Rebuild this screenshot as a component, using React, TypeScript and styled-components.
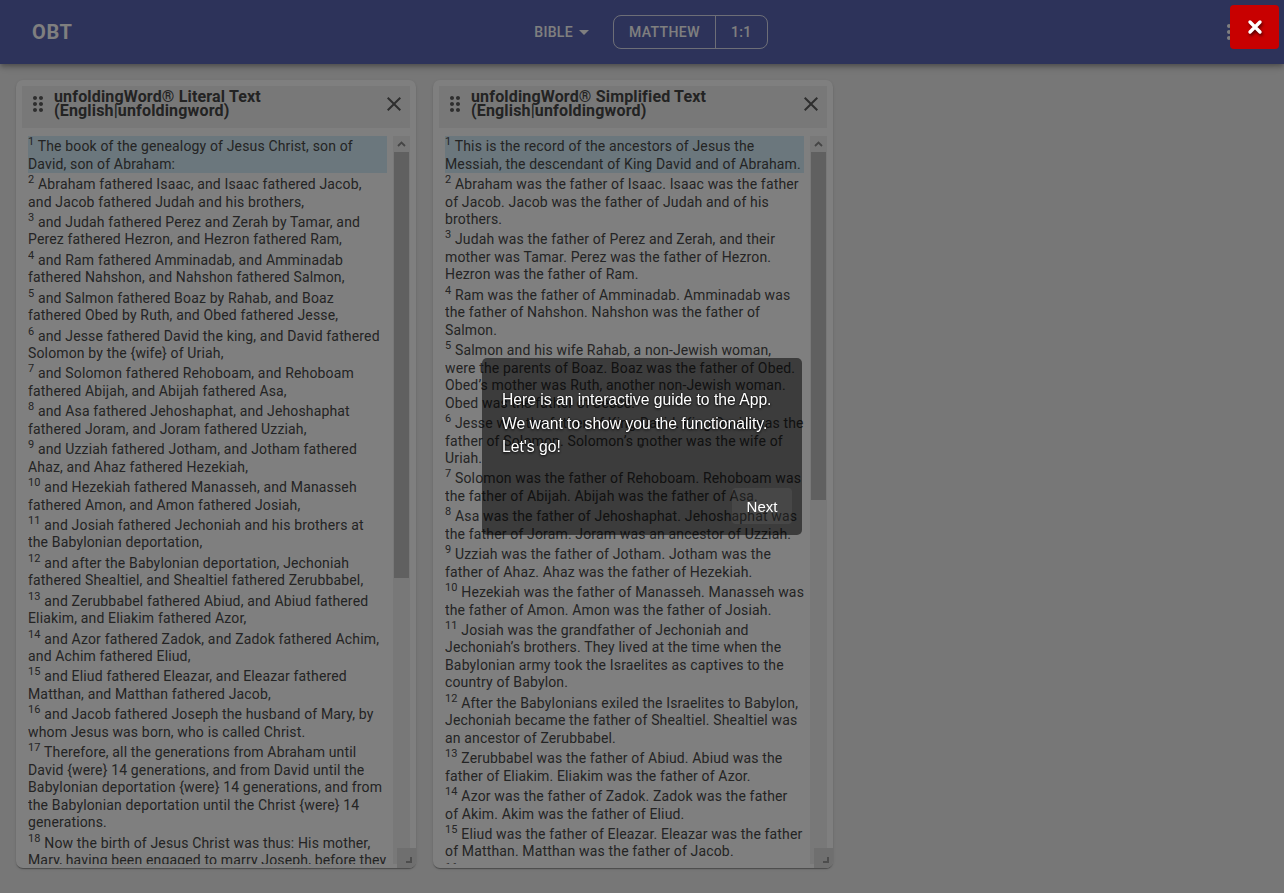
import React from "react";
import styled, { createGlobalStyle } from "styled-components";

const GlobalStyle = createGlobalStyle`
  html, body { margin: 0; padding: 0; }
  body {
    background: #eeeeee;
    font-family: Roboto, "Noto Sans", "Liberation Sans", sans-serif;
    overflow: hidden;
  }
  * { box-sizing: border-box; }
`;

const Page = styled.div`
  position: relative;
  width: 100%;
  min-height: 100vh;
  background: #eeeeee;
`;

const AppBar = styled.header`
  position: relative;
  z-index: 1;
  height: 64px;
  display: grid;
  grid-template-columns: 1fr auto 1fr;
  align-items: center;
  padding: 0 15px 0 32px;
  background: #5a66b4;
  color: #ffffff;
  box-shadow: 0 2px 4px -1px rgba(0, 0, 0, 0.2), 0 4px 5px 0 rgba(0, 0, 0, 0.14),
    0 1px 10px 0 rgba(0, 0, 0, 0.12);
`;

const Logo = styled.div`
  font-size: 20px;
  font-weight: 700;
  letter-spacing: 0.6px;
`;

const CenterNav = styled.nav`
  display: flex;
  align-items: center;
  gap: 17px;
  margin-left: 1px;
`;

const BibleSelect = styled.div`
  display: flex;
  align-items: center;
  font-size: 14px;
  font-weight: 500;
  letter-spacing: 0.3px;
  text-transform: uppercase;
  & svg {
    margin-left: -1px;
  }
`;

const RefGroup = styled.div`
  display: flex;
  height: 34px;
  border: 1px solid rgba(255, 255, 255, 0.78);
  border-radius: 8px;
`;

const RefSegment = styled.div`
  display: flex;
  align-items: center;
  padding: 0 15px;
  font-size: 14px;
  font-weight: 500;
  letter-spacing: 0.4px;
  text-transform: uppercase;
  & + & {
    border-left: 1px solid rgba(255, 255, 255, 0.78);
  }
`;

const RightTools = styled.div`
  justify-self: end;
  display: flex;
  align-items: center;
  margin-right: 28px;
`;

const Workspace = styled.main`
  display: flex;
  align-items: flex-start;
  gap: 17px;
  padding: 16px;
`;

const Card = styled.section`
  position: relative;
  width: 400px;
  height: 788px;
  display: flex;
  flex-direction: column;
  padding: 6px 6px 4px;
  background: #ffffff;
  border-radius: 7px;
  box-shadow: 0 2px 1px -1px rgba(0, 0, 0, 0.2), 0 1px 1px 0 rgba(0, 0, 0, 0.14),
    0 1px 3px 0 rgba(0, 0, 0, 0.12);
`;

const CardHeader = styled.div`
  height: 42px;
  flex: none;
  display: flex;
  align-items: center;
  padding: 4px 4px 10px 4px;
  background: #f0f0f0;
`;

const Title = styled.h2`
  flex: 1;
  margin: 0 0 0 4px;
  font-size: 16px;
  font-weight: 700;
  line-height: 14px;
  letter-spacing: 0.16px;
  color: #464646;
`;

const IconSlot = styled.span`
  display: flex;
  width: 24px;
  height: 24px;
  flex: none;
  color: #5c5c5c;
`;

const CardBody = styled.div`
  flex: 1;
  min-height: 0;
  margin-top: 8px;
  display: grid;
  grid-template-columns: 359px 17px;
  column-gap: 6px;
  padding-left: 6px;
`;

const ScrollContent = styled.div`
  overflow: hidden;
  font-size: 14px;
  line-height: 17.5px;
  letter-spacing: 0.152px;
  color: #484848;
`;

const Verse = styled.div<{ $active?: boolean }>`
  padding-top: 2.2px;
  margin-bottom: 0.7px;
  background: ${(p) => (p.$active ? "#d6effa" : "transparent")};
`;

const VerseNum = styled.sup`
  font-size: 11px;
  line-height: 0;
  vertical-align: 6px;
`;

const ScrollBar = styled.div`
  display: flex;
  flex-direction: column;
  background: #f1f1f1;
`;

const ScrollButton = styled.div`
  height: 16px;
  flex: none;
  display: flex;
  align-items: center;
  justify-content: center;
`;

const ScrollThumb = styled.div`
  margin: 0 1px;
  background: #c1c1c1;
`;

const ResizeHandle = styled.div`
  position: absolute;
  right: 0;
  bottom: 0;
  width: 19px;
  height: 20px;
  background: #dedede;
  border-bottom-right-radius: 7px;
  &::after {
    content: "";
    position: absolute;
    right: 4px;
    bottom: 5px;
    width: 4px;
    height: 4px;
    border-right: 2px solid #9a9a9a;
    border-bottom: 2px solid #9a9a9a;
  }
`;

const Overlay = styled.div`
  position: fixed;
  inset: 0;
  z-index: 10;
  background: rgba(0, 0, 0, 0.5);
`;

const TourTooltip = styled.div`
  position: absolute;
  left: 482px;
  top: 358px;
  z-index: 11;
  width: 320px;
  height: 177px;
  display: flex;
  flex-direction: column;
  background: rgba(0, 0, 0, 0.53);
  border-radius: 5px;
  color: #ffffff;
  font-family: "Liberation Sans", Arial, sans-serif;
  font-size: 15.7px;
`;

const TourText = styled.div`
  padding: 30px 20px 0;
  line-height: 23.5px;
  text-shadow: 0 1px 3px rgba(0, 0, 0, 0.9), 0 0 2px rgba(0, 0, 0, 0.6);
`;

const TourFooter = styled.div`
  margin-top: auto;
  display: flex;
  justify-content: flex-end;
  padding: 0 10px 11px;
`;

const NextButton = styled.button`
  width: 60px;
  height: 36px;
  border: 0;
  border-radius: 4px;
  background: rgba(255, 255, 255, 0.06);
  color: #ffffff;
  font-family: "Liberation Sans", Arial, sans-serif;
  font-size: 15px;
  padding: 0;
  cursor: pointer;
`;

const Beacon = styled.span`
  position: absolute;
  left: 157px;
  top: 86px;
  width: 4px;
  height: 4px;
  border-radius: 50%;
  background: rgba(0, 0, 0, 0.45);
`;

const CloseTour = styled.button`
  position: absolute;
  top: 5px;
  right: 5px;
  z-index: 12;
  width: 49px;
  height: 44px;
  border: 0;
  border-radius: 4px;
  background: #c80000;
  display: flex;
  align-items: center;
  justify-content: center;
  padding: 0;
  cursor: pointer;
`;

const CrossSvg = styled.svg`
  width: 16px;
  height: 16px;
  filter: drop-shadow(1px 2px 1.5px rgba(0, 0, 0, 0.6));
`;

const DragIcon = () => (
  <svg width="24" height="24" viewBox="0 0 24 24" fill="currentColor">
    <path d="M11 18c0 1.1-.9 2-2 2s-2-.9-2-2 .9-2 2-2 2 .9 2 2zm-2-8c-1.1 0-2 .9-2 2s.9 2 2 2 2-.9 2-2-.9-2-2-2zm0-6c-1.1 0-2 .9-2 2s.9 2 2 2 2-.9 2-2-.9-2-2-2zm6 4c1.1 0 2-.9 2-2s-.9-2-2-2-2 .9-2 2 .9 2 2 2zm0 2c-1.1 0-2 .9-2 2s.9 2 2 2 2-.9 2-2-.9-2-2-2zm0 6c-1.1 0-2 .9-2 2s.9 2 2 2 2-.9 2-2-.9-2-2-2z" />
  </svg>
);

const CloseIcon = () => (
  <svg width="24" height="24" viewBox="0 0 24 24" fill="currentColor">
    <path d="M19 6.41 17.59 5 12 10.59 6.41 5 5 6.41 10.59 12 5 17.59 6.41 19 12 13.41 17.59 19 19 17.59 13.41 12z" />
  </svg>
);

const ArrowDrop = () => (
  <svg width="24" height="24" viewBox="0 0 24 24" fill="currentColor">
    <path d="M7 10l5 5 5-5z" />
  </svg>
);

const MoreVert = () => (
  <svg width="24" height="24" viewBox="0 0 24 24" fill="currentColor">
    <path d="M12 8c1.1 0 2-.9 2-2s-.9-2-2-2-2 .9-2 2 .9 2 2 2zm0 2c-1.1 0-2 .9-2 2s.9 2 2 2 2-.9 2-2-.9-2-2-2zm0 6c-1.1 0-2 .9-2 2s.9 2 2 2 2-.9 2-2-.9-2-2-2z" />
  </svg>
);

const Chevron = () => (
  <svg width="9" height="6" viewBox="0 0 9 6">
    <polyline points="1,5 4.5,1.5 8,5" fill="none" stroke="#8a8a8a" strokeWidth="1.8" />
  </svg>
);

const BigX = () => (
  <CrossSvg viewBox="0 0 16 16">
    <path d="M3 3 L13 13 M13 3 L3 13" stroke="#ffffff" strokeWidth="3.4" strokeLinecap="round" />
  </CrossSvg>
);

const literal: string[] = [
  "The book of the genealogy of Jesus Christ, son of David, son of Abraham:",
  "Abraham fathered Isaac, and Isaac fathered Jacob, and Jacob fathered Judah and his brothers,",
  "and Judah fathered Perez and Zerah by Tamar, and Perez fathered Hezron, and Hezron fathered Ram,",
  "and Ram fathered Amminadab, and Amminadab fathered Nahshon, and Nahshon fathered Salmon,",
  "and Salmon fathered Boaz by Rahab, and Boaz fathered Obed by Ruth, and Obed fathered Jesse,",
  "and Jesse fathered David the king, and David fathered Solomon by the {wife} of Uriah,",
  "and Solomon fathered Rehoboam, and Rehoboam fathered Abijah, and Abijah fathered Asa,",
  "and Asa fathered Jehoshaphat, and Jehoshaphat fathered Joram, and Joram fathered Uzziah,",
  "and Uzziah fathered Jotham, and Jotham fathered Ahaz, and Ahaz fathered Hezekiah,",
  "and Hezekiah fathered Manasseh, and Manasseh fathered Amon, and Amon fathered Josiah,",
  "and Josiah fathered Jechoniah and his brothers at the Babylonian deportation,",
  "and after the Babylonian deportation, Jechoniah fathered Shealtiel, and Shealtiel fathered Zerubbabel,",
  "and Zerubbabel fathered Abiud, and Abiud fathered Eliakim, and Eliakim fathered Azor,",
  "and Azor fathered Zadok, and Zadok fathered Achim, and Achim fathered Eliud,",
  "and Eliud fathered Eleazar, and Eleazar fathered Matthan, and Matthan fathered Jacob,",
  "and Jacob fathered Joseph the husband of Mary, by whom Jesus was born, who is called Christ.",
  "Therefore, all the generations from Abraham until David {were} 14 generations, and from David until the Babylonian deportation {were} 14 generations, and from the Babylonian deportation until the Christ {were} 14 generations.",
  "Now the birth of Jesus Christ was thus: His mother, Mary, having been engaged to marry Joseph, before they came together, she was found pregnant by the Holy Spirit.",
  "But Joseph her husband, being righteous and not wanting to disgrace her publicly, intended to divorce her secretly.",
];

const simplified: string[] = [
  "This is the record of the ancestors of Jesus the Messiah, the descendant of King David and of Abraham.",
  "Abraham was the father of Isaac. Isaac was the father of Jacob. Jacob was the father of Judah and of his brothers.",
  "Judah was the father of Perez and Zerah, and their mother was Tamar. Perez was the father of Hezron. Hezron was the father of Ram.",
  "Ram was the father of Amminadab. Amminadab was the father of Nahshon. Nahshon was the father of Salmon.",
  "Salmon and his wife Rahab, a non-Jewish woman, were the parents of Boaz. Boaz was the father of Obed. Obed\u2019s mother was Ruth, another non-Jewish woman. Obed was the father of Jesse.",
  "Jesse was the father of King David. King David was the father of Solomon. Solomon\u2019s mother was the wife of Uriah.",
  "Solomon was the father of Rehoboam. Rehoboam was the father of Abijah. Abijah was the father of Asa.",
  "Asa was the father of Jehoshaphat. Jehoshaphat was the father of Joram. Joram was an ancestor of Uzziah.",
  "Uzziah was the father of Jotham. Jotham was the father of Ahaz. Ahaz was the father of Hezekiah.",
  "Hezekiah was the father of Manasseh. Manasseh was the father of Amon. Amon was the father of Josiah.",
  "Josiah was the grandfather of Jechoniah and Jechoniah\u2019s brothers. They lived at the time when the Babylonian army took the Israelites as captives to the country of Babylon.",
  "After the Babylonians exiled the Israelites to Babylon, Jechoniah became the father of Shealtiel. Shealtiel was an ancestor of Zerubbabel.",
  "Zerubbabel was the father of Abiud. Abiud was the father of Eliakim. Eliakim was the father of Azor.",
  "Azor was the father of Zadok. Zadok was the father of Akim. Akim was the father of Eliud.",
  "Eliud was the father of Eleazar. Eleazar was the father of Matthan. Matthan was the father of Jacob.",
  "Jacob was the father of Joseph, the husband of Mary. Mary was the mother of Jesus, who is called the Messiah.",
];

type PanelProps = { title: string; verses: string[]; thumb: number };

const Panel = ({ title, verses, thumb }: PanelProps) => (
  <Card>
    <CardHeader>
      <IconSlot>
        <DragIcon />
      </IconSlot>
      <Title>{title}</Title>
      <IconSlot>
        <CloseIcon />
      </IconSlot>
    </CardHeader>
    <CardBody>
      <ScrollContent>
        {verses.map((v, i) => (
          <Verse key={i} $active={i === 0}>
            <VerseNum>{i + 1}</VerseNum> {v}
          </Verse>
        ))}
      </ScrollContent>
      <ScrollBar>
        <ScrollButton>
          <Chevron />
        </ScrollButton>
        <ScrollThumb style={{ height: thumb }} />
      </ScrollBar>
    </CardBody>
    <ResizeHandle />
  </Card>
);

export default function App() {
  return (
    <Page>
      <GlobalStyle />
      <AppBar>
        <Logo>OBT</Logo>
        <CenterNav>
          <BibleSelect>
            Bible
            <ArrowDrop />
          </BibleSelect>
          <RefGroup>
            <RefSegment>Matthew</RefSegment>
            <RefSegment>1:1</RefSegment>
          </RefGroup>
        </CenterNav>
        <RightTools>
          <MoreVert />
        </RightTools>
      </AppBar>
      <Workspace>
        <Panel title="unfoldingWord® Literal Text (English|unfoldingword)" verses={literal} thumb={426} />
        <Panel title="unfoldingWord® Simplified Text (English|unfoldingword)" verses={simplified} thumb={348} />
      </Workspace>
      <Overlay />
      <TourTooltip>
        <TourText>
          Here is an interactive guide to the App.
          <br />
          We want to show you the functionality.
          <br />
          Let&apos;s go!
        </TourText>
        <Beacon />
        <TourFooter>
          <NextButton>Next</NextButton>
        </TourFooter>
      </TourTooltip>
      <CloseTour aria-label="close">
        <BigX />
      </CloseTour>
    </Page>
  );
}
